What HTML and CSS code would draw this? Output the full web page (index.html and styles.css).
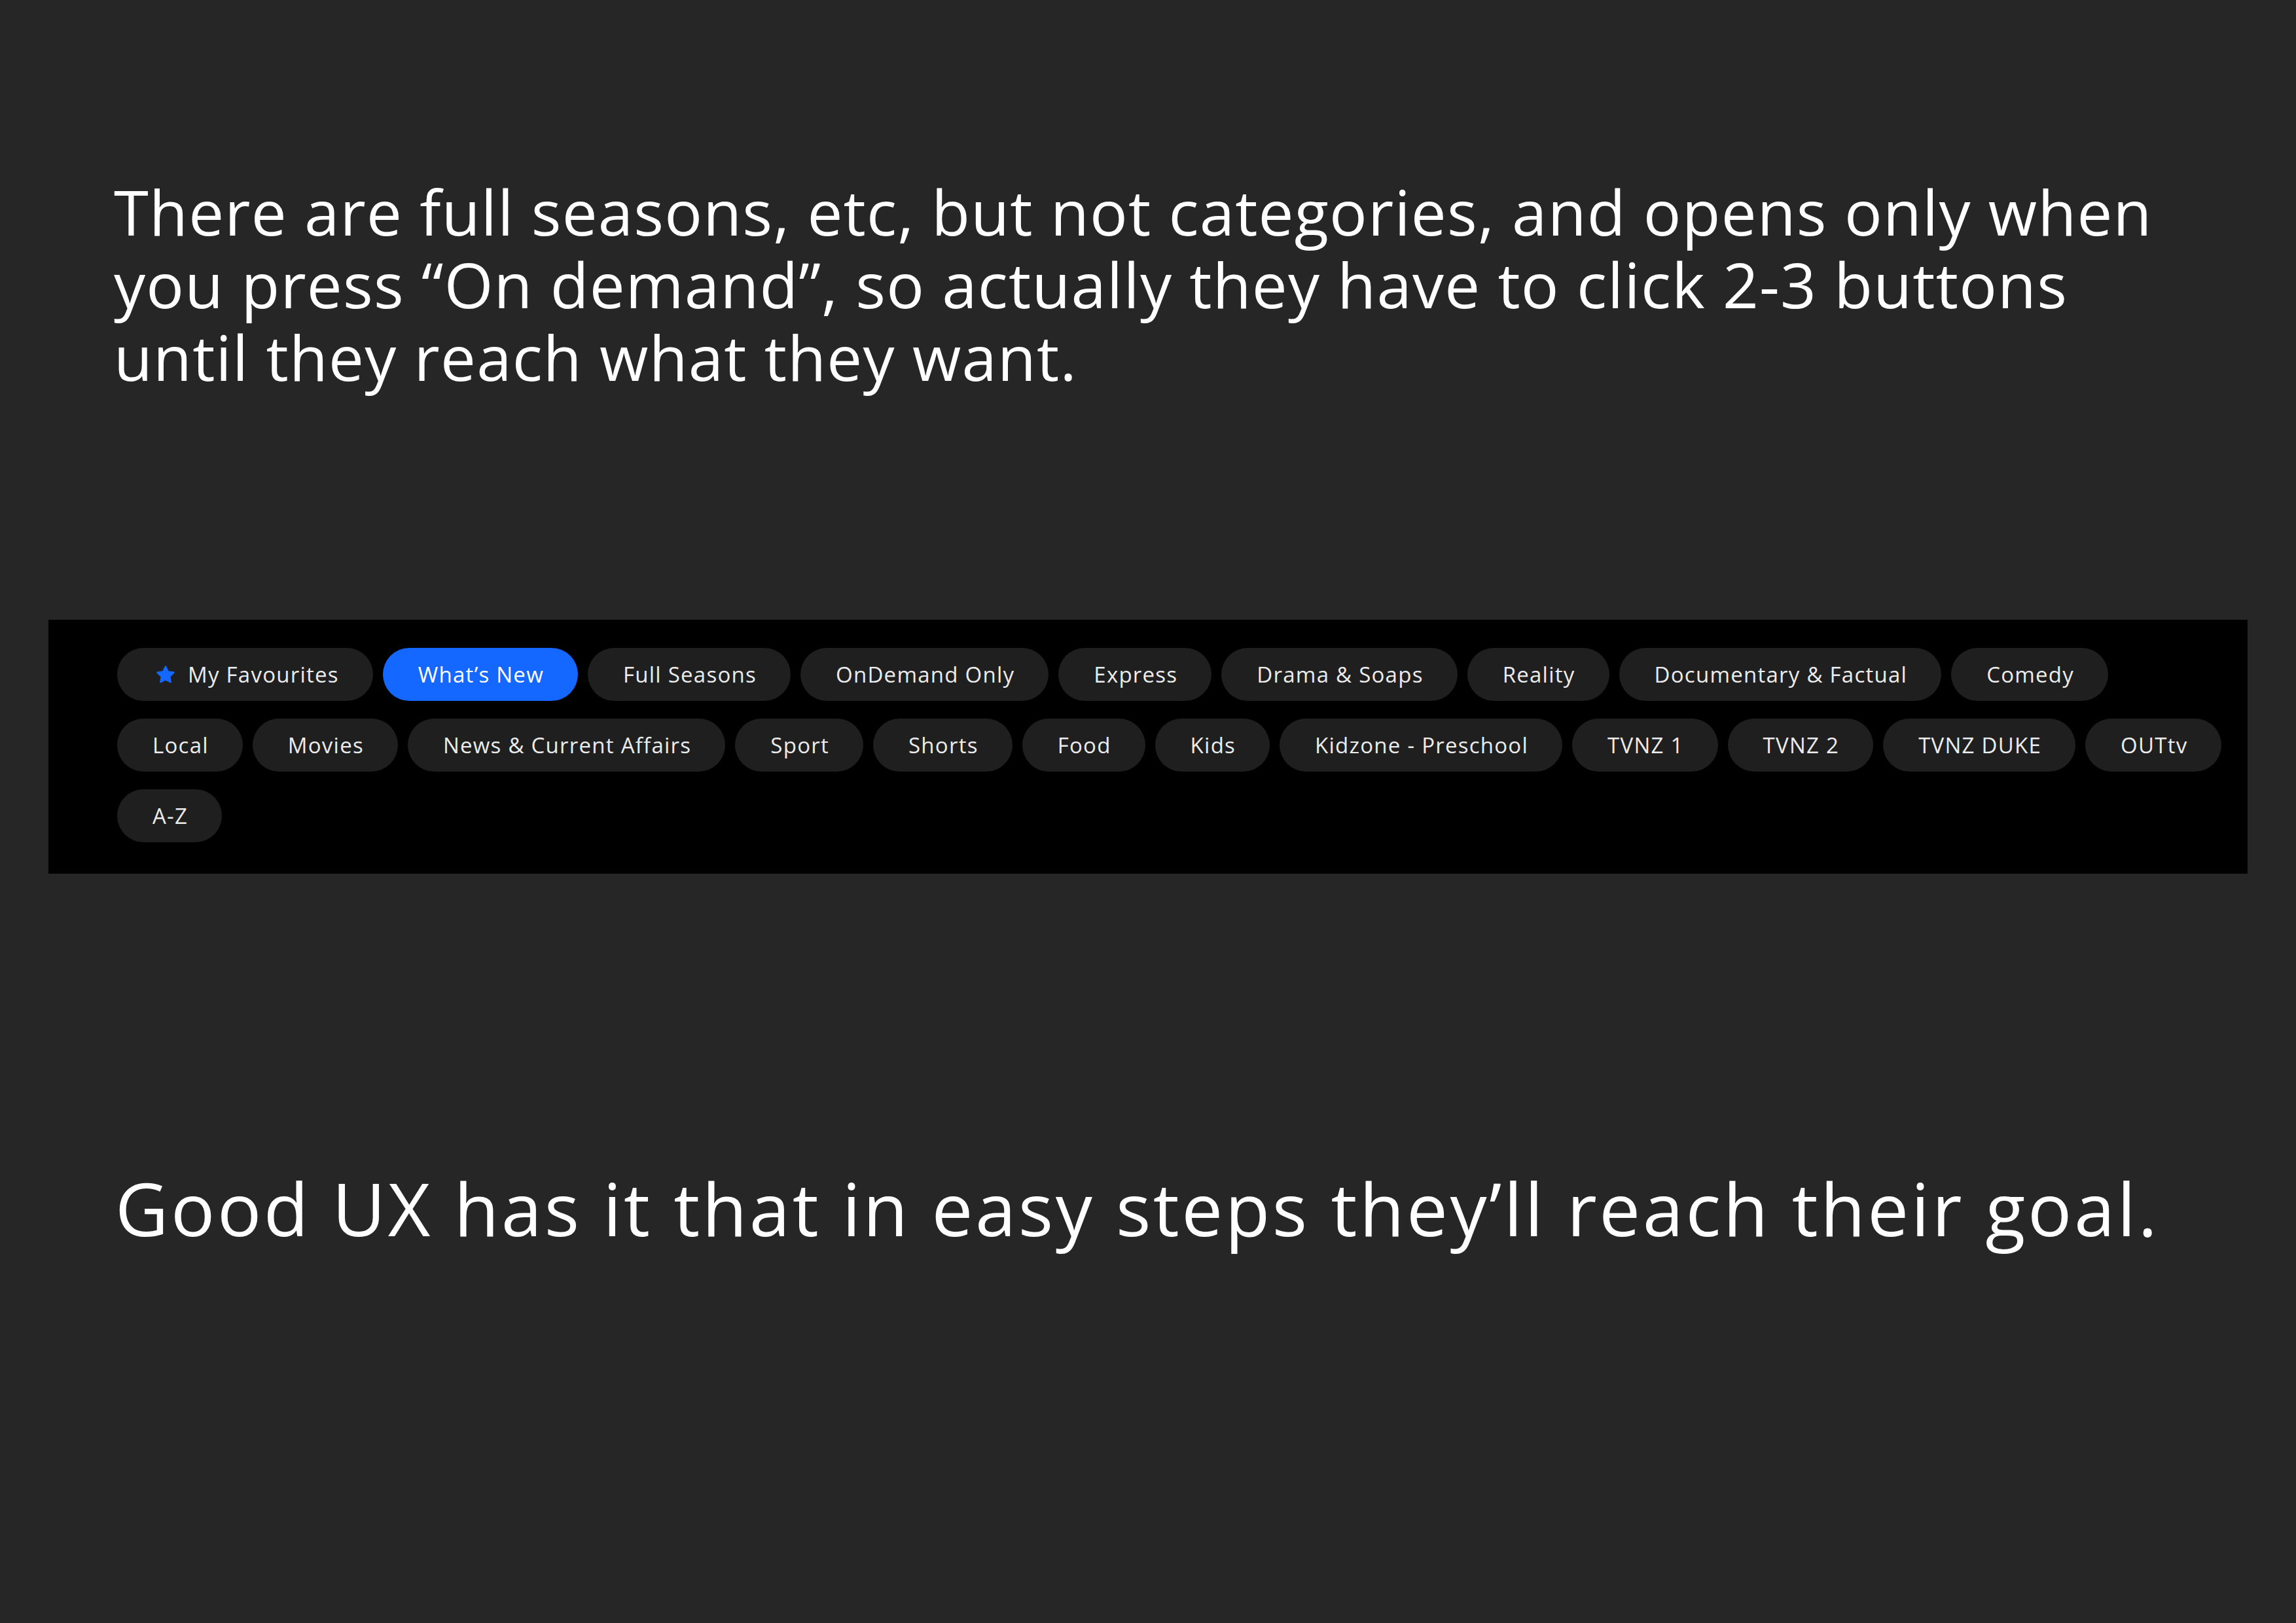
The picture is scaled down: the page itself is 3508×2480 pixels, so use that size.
FILE: index.html
```html
<!DOCTYPE html>
<html lang="en">
<head>
<meta charset="utf-8">
<title>On demand categories</title>
<link rel="stylesheet" href="styles.css">
</head>
<body>
<main class="page">
  <p class="note note-top">There are full seasons, etc, but not categories, and opens only when<br>you press “On demand”, so actually they have to click 2-3 buttons<br>until they reach what they want.</p>

  <section class="panel">
    <nav class="chips">
      <span class="chip chip-fav"><svg class="star" viewBox="0 0 24 24" aria-hidden="true"><path d="M12 2.8l2.8 5.9 6.4.8-4.7 4.5 1.2 6.4L12 17.3l-5.7 3.1 1.2-6.4-4.7-4.5 6.4-.8z"/></svg>My Favourites</span>
      <span class="chip chip-active">What’s New</span>
      <span class="chip">Full Seasons</span>
      <span class="chip">OnDemand Only</span>
      <span class="chip">Express</span>
      <span class="chip">Drama &amp; Soaps</span>
      <span class="chip">Reality</span>
      <span class="chip">Documentary &amp; Factual</span>
      <span class="chip">Comedy</span>
      <span class="chip">Local</span>
      <span class="chip">Movies</span>
      <span class="chip">News &amp; Current Affairs</span>
      <span class="chip">Sport</span>
      <span class="chip">Shorts</span>
      <span class="chip">Food</span>
      <span class="chip">Kids</span>
      <span class="chip">Kidzone - Preschool</span>
      <span class="chip">TVNZ 1</span>
      <span class="chip">TVNZ 2</span>
      <span class="chip">TVNZ DUKE</span>
      <span class="chip">OUTtv</span>
      <span class="chip">A-Z</span>
    </nav>
  </section>

  <p class="note note-bottom">Good UX has it that in easy steps they’ll reach their goal.</p>
</main>
</body>
</html>
```

FILE: styles.css
```css
html, body {
  margin: 0;
  padding: 0;
}

body {
  background: #262626;
  width: 3508px;
  height: 2480px;
  overflow: hidden;
}

.page {
  display: flex;
  flex-direction: column;
  padding-top: 267px;
}

.note {
  margin: 0;
  color: #ffffff;
  font-family: "Open Sans", "DejaVu Sans", sans-serif;
  font-weight: 400;
  white-space: nowrap;
}

.note-top {
  font-size: 96px;
  line-height: 111px;
  letter-spacing: 1.2px;
  padding-left: 174px;
}

.note-bottom {
  font-size: 112px;
  line-height: 129px;
  letter-spacing: 3.55px;
  padding-left: 176px;
  margin-top: 446px;
}

.panel {
  margin: 347px 74px 0 74px;
  background: #000000;
  padding: 43px 20px 48px 105px;
}

.chips {
  display: flex;
  flex-wrap: wrap;
  gap: 27px 15px;
}

.chip {
  display: inline-flex;
  align-items: center;
  height: 81px;
  padding: 0 52px 0 54px;
  border-radius: 41px;
  background: #1f1f1f;
  color: #ececec;
  font-family: "Open Sans", "DejaVu Sans", sans-serif;
  font-size: 33px;
  font-weight: 500;
  letter-spacing: 1.25px;
  white-space: nowrap;
}

.chip-active {
  background: #1468ff;
  color: #ffffff;
}

.chip-fav {
  padding-left: 58px;
}

.star {
  width: 32px;
  height: 32px;
  margin-right: 18px;
  fill: #1468ff;
  stroke: #1468ff;
  stroke-width: 2;
  stroke-linejoin: round;
}
```
